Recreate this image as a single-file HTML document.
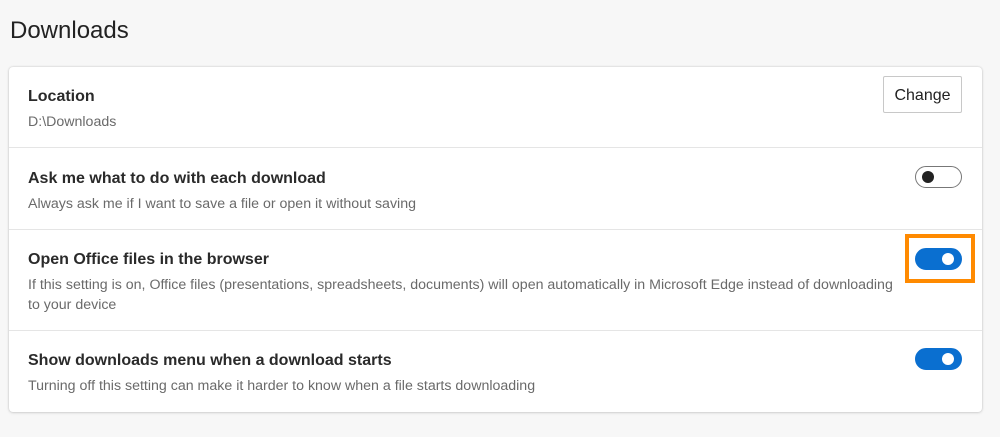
<!DOCTYPE html>
<html><head><style>
body{margin:0;width:1000px;height:437px;background:#f7f7f7;font-family:"Liberation Sans",sans-serif;color:#1a1a1a;position:relative;overflow:hidden}
h1{position:absolute;left:10px;top:17px;margin:0;font-size:24px;font-weight:normal;color:#222}
.card{position:absolute;left:9px;top:67px;width:973px;height:345px;background:#fff;border-radius:4px;box-shadow:0 0 2px rgba(0,0,0,.18),0 1px 3px rgba(0,0,0,.1)}
.row{position:absolute;left:0;width:973px;border-top:1px solid #e5e5e5}
.t{position:absolute;left:19px;font-size:16px;font-weight:bold;color:#2a2a2a;white-space:nowrap}
.d{position:absolute;left:19px;font-size:14.2px;color:#6a6a6a;line-height:20px;white-space:nowrap}
.tg{position:absolute;left:906px;width:45px;height:20px;border-radius:12px}
.off{border:1px solid #777;background:#fff}
.off::after{content:"";position:absolute;left:6px;top:4px;width:12px;height:12px;border-radius:50%;background:#222}
.on{background:#0a6fd0;border:1px solid #0a6fd0}
.on::after{content:"";position:absolute;right:7px;top:4px;width:12px;height:12px;border-radius:50%;background:#fff}
.btn{position:absolute;left:874px;top:9px;width:77px;height:35px;border:1px solid #c8c8c8;border-radius:2px;font-size:16px;line-height:37px;text-align:center;color:#222}
.or{position:absolute;left:905px;top:234px;width:62px;height:41px;border:4px solid #ff8a00}
</style></head><body>
<h1>Downloads</h1>
<div class="card">
 <div class="t" style="top:21px">Location</div>
 <div class="d" style="top:45px">D:\Downloads</div>
 <div class="btn">Change</div>
 <div class="row" style="top:80px;height:82px">
  <div class="t" style="top:22px">Ask me what to do with each download</div>
  <div class="d" style="top:46px">Always ask me if I want to save a file or open it without saving</div>
  <div class="tg off" style="top:18px"></div>
 </div>
 <div class="row" style="top:162px;height:101px">
  <div class="t" style="top:21px">Open Office files in the browser</div>
  <div class="d" style="top:45px">If this setting is on, Office files (presentations, spreadsheets, documents) will open automatically in Microsoft Edge instead of downloading<br>to your device</div>
  <div class="tg on" style="top:18px"></div>
 </div>
 <div class="row" style="top:263px;height:82px">
  <div class="t" style="top:21px">Show downloads menu when a download starts</div>
  <div class="d" style="top:45px">Turning off this setting can make it harder to know when a file starts downloading</div>
  <div class="tg on" style="top:17px"></div>
 </div>
</div>
<div class="or"></div>
</body></html>
